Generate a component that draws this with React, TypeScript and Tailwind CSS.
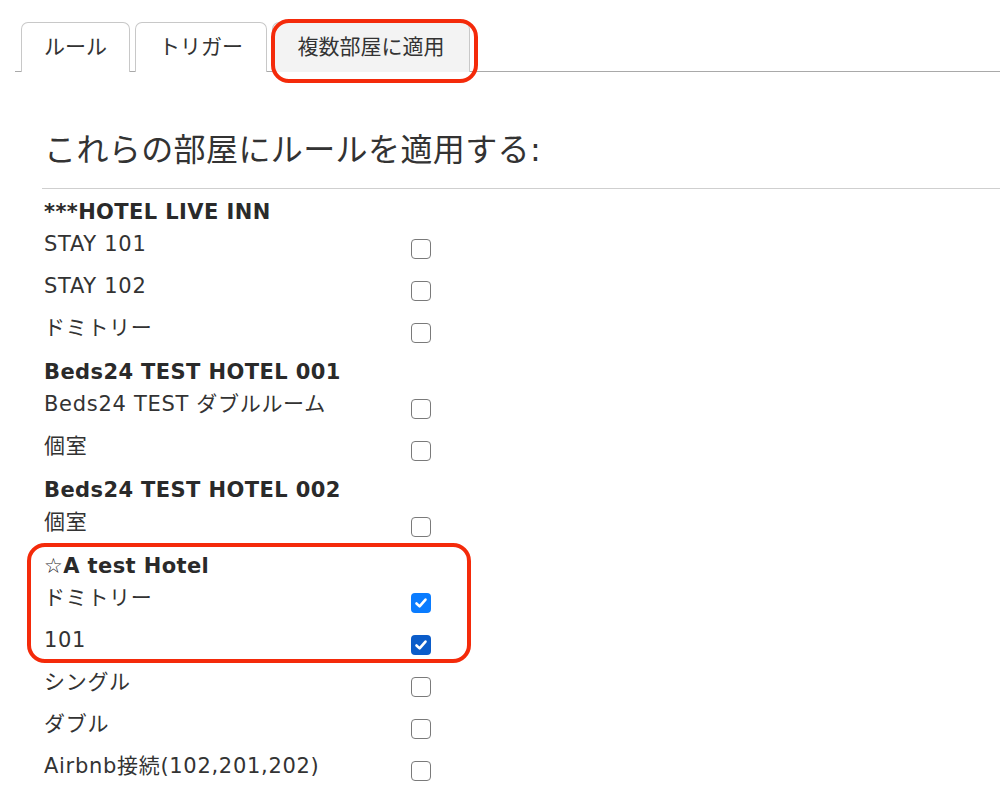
import React from 'react';

type Room = { name: string; checked?: boolean; focused?: boolean };
type Hotel = { name: string; rooms: Room[] };

const hotels: Hotel[] = [
  { name: '***HOTEL LIVE INN', rooms: [{ name: 'STAY 101' }, { name: 'STAY 102' }, { name: 'ドミトリー' }] },
  { name: 'Beds24 TEST HOTEL 001', rooms: [{ name: 'Beds24 TEST ダブルルーム' }, { name: '個室' }] },
  { name: 'Beds24 TEST HOTEL 002', rooms: [{ name: '個室' }] },
  {
    name: '☆A test Hotel',
    rooms: [
      { name: 'ドミトリー', checked: true },
      { name: '101', checked: true, focused: true },
      { name: 'シングル' },
      { name: 'ダブル' },
      { name: 'Airbnb接続(102,201,202)' },
    ],
  },
];

const tabs = [
  { label: 'ルール', w: 'w-[109px]' },
  { label: 'トリガー', w: 'w-[132px]' },
  { label: '複数部屋に適用', w: 'w-[198px]' },
];

const font = '"DejaVu Sans", "Noto Sans CJK JP", sans-serif';

function Checkbox({ checked, focused }: { checked?: boolean; focused?: boolean }) {
  if (checked) {
    return (
      <div
        className={
          'w-[20px] h-[20px] rounded-[4px] flex items-center justify-center ' +
          (focused ? 'bg-[#0b5cc9]' : 'bg-[#0a7cff]')
        }
      >
        <svg width="14" height="14" viewBox="0 0 14 14" fill="none">
          <path d="M2.5 7.5 L5.6 10.4 L11.5 3.6" stroke="white" strokeWidth="2.6" strokeLinecap="round" strokeLinejoin="round" />
        </svg>
      </div>
    );
  }
  return <div className="w-[20px] h-[20px] rounded-[4px] border-[1.5px] border-[#7a7a7a] bg-white" />;
}

export default function App() {
  return (
    <div className="relative w-[1000px] h-[792px] bg-white overflow-hidden text-[#333]" style={{ fontFamily: font }}>
      {/* Tabs */}
      <div className="pt-[22px] pl-[15px]">
        <div className="flex items-end gap-[5px] pl-[6px] border-b border-[#a9a9a9]">
          {tabs.map((t, i) => (
            <div
              key={t.label}
              className={
                'h-[50px] -mb-px flex items-center justify-center rounded-t-[7px] border border-b-0 border-[#c8c8c8] text-[21px] ' +
                t.w +
                (i === 2 ? ' bg-[#f3f3f3]' : ' bg-white')
              }
            >
              {t.label}
            </div>
          ))}
        </div>
      </div>

      {/* Heading */}
      <div className="pl-[44px] pt-[58px]">
        <h2 className="text-[32px] leading-[40px] tracking-[0.4px]">これらの部屋にルールを適用する:</h2>
      </div>
      <div className="ml-[42px] mt-[18px] border-t border-[#cfcfcf]" />

      {/* Room list */}
      <div className="pl-[44px] pt-[6px]">
        {hotels.map((h) => (
          <div key={h.name}>
            <div className="h-[34px] pt-[2px] flex items-center text-[21px] font-bold tracking-[0.4px] text-[#2a2a2a]">
              {h.name}
            </div>
            {h.rooms.map((r, idx) => (
              <div key={idx} className="h-[42px] flex">
                <div className="w-[367px] text-[21px] leading-[30px] tracking-[0.7px]">{r.name}</div>
                <div className="pt-[10px]">
                  <Checkbox checked={r.checked} focused={r.focused} />
                </div>
              </div>
            ))}
          </div>
        ))}
      </div>

      {/* Red annotation outlines */}
      <div className="absolute left-[271px] top-[19px] w-[207px] h-[64px] rounded-[18px] border-[4px] border-[#f42a0a]" />
      <div className="absolute left-[27px] top-[543px] w-[444px] h-[120px] rounded-[18px] border-[4px] border-[#f42a0a]" />
    </div>
  );
}
